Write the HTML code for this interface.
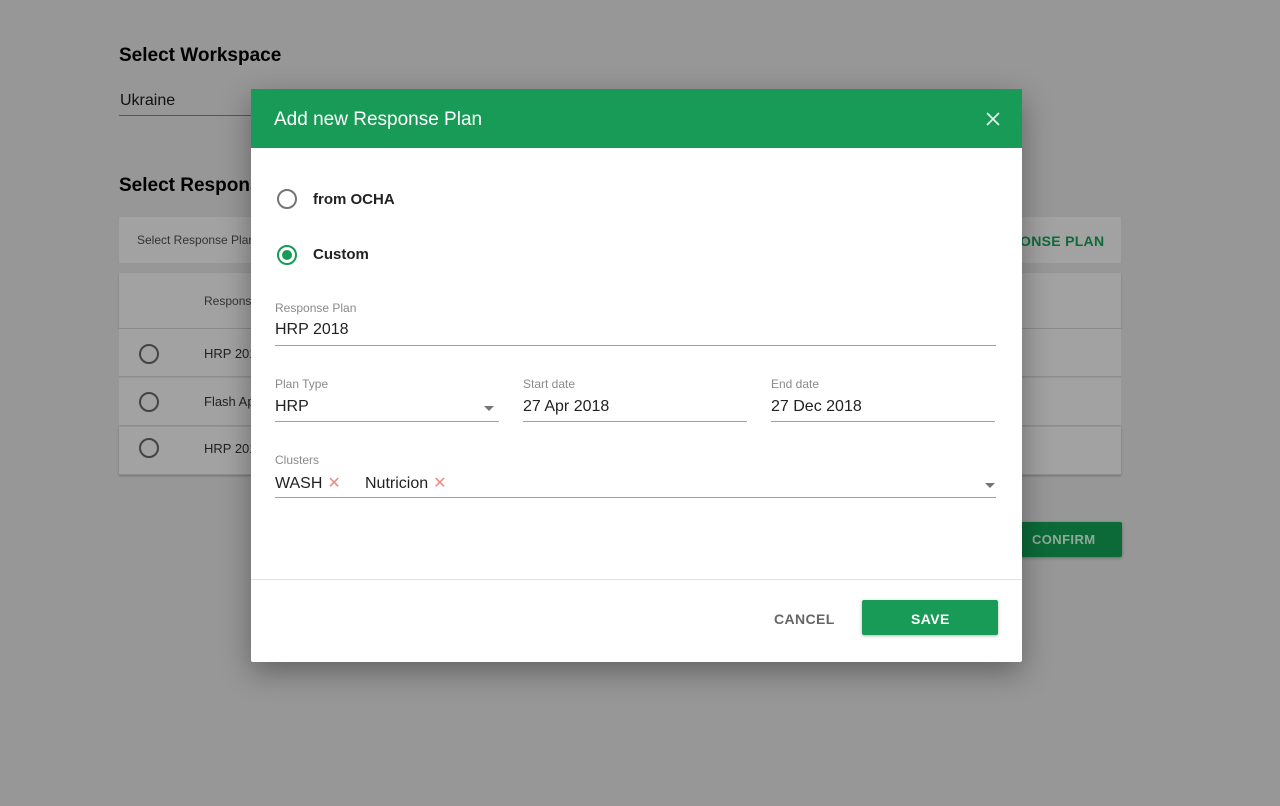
<!DOCTYPE html>
<html><head><style>
body{margin:0;width:1280px;height:806px;background:#979797;font-family:"Liberation Sans",sans-serif;position:relative;overflow:hidden;}
.a{position:absolute;}
h2{margin:0;font-size:19px;font-weight:bold;color:#000;}
.rad{position:absolute;width:16px;height:16px;border:2px solid #3f3f3f;border-radius:50%;}
.row{position:absolute;left:119px;width:1002px;height:47px;background:#a2a2a2;border-bottom:1px solid #8e8e8e;}
.lbl{position:absolute;font-size:12px;color:#8a8a8a;}
.val{position:absolute;font-size:16px;color:#222;}
.ln{position:absolute;height:1px;background:#9e9e9e;}
.x{color:#ef8a7e;font-size:16px;margin-left:5px;}
</style></head><body>
<h2 class="a" style="left:119px;top:45px">Select Workspace</h2>
<div class="a" style="left:120px;top:92px;font-size:16px;color:#111">Ukraine</div>
<div class="a" style="left:119px;top:115px;width:140px;height:1px;background:#555"></div>
<h2 class="a" style="left:119px;top:175px">Select Response Plan</h2>
<div class="a" style="left:119px;top:217px;width:1002px;height:46px;background:#a2a2a2"></div>
<div class="a" style="left:137px;top:233px;font-size:12px;color:#333">Select Response Plan</div>
<div class="a" style="left:1020px;top:233px;font-size:14px;font-weight:bold;color:#0c6b38;letter-spacing:.3px">ONSE PLAN</div>
<div class="a" style="left:119px;top:273px;width:1002px;height:55px;background:#a2a2a2;border-bottom:1px solid #8a8a8a;box-shadow:0 1px 2px rgba(0,0,0,.2)"></div>
<div class="a" style="left:204px;top:294px;font-size:12px;color:#333">Respons</div>
<div class="row" style="top:329px"></div><div class="row" style="top:378px"></div><div class="row" style="top:427px;box-shadow:0 1px 2px rgba(0,0,0,.25)"></div>
<div class="rad" style="left:139px;top:344px;border-color:#444"></div>
<div class="rad" style="left:139px;top:392px;border-color:#444"></div>
<div class="rad" style="left:139px;top:438px;border-color:#444"></div>
<div class="a" style="left:204px;top:346px;font-size:13px;color:#222">HRP 201</div>
<div class="a" style="left:204px;top:394px;font-size:13px;color:#222">Flash Ap</div>
<div class="a" style="left:204px;top:441px;font-size:13px;color:#222">HRP 201</div>
<div class="a" style="left:1010px;top:522px;width:112px;height:35px;background:#0c6a38;border-radius:2px;box-shadow:0 1px 3px rgba(0,0,0,.3)"></div>
<div class="a" style="left:1032px;top:532px;font-size:13px;font-weight:bold;color:#8fa99a;letter-spacing:.4px">CONFIRM</div>

<div class="a" style="left:251px;top:89px;width:771px;height:573px;background:#fff;box-shadow:0 10px 30px rgba(0,0,0,.35);border-radius:2px">
 <div class="a" style="left:0;top:0;width:771px;height:59px;background:#189b56"></div>
 <div class="a" style="left:23px;top:20px;font-size:19px;color:#fff">Add new Response Plan</div>
 <svg class="a" style="left:735px;top:23px" width="14" height="14"><path d="M1 1L13 13M13 1L1 13" stroke="#e8f5ee" stroke-width="1.6"/></svg>
 <div class="rad" style="left:26px;top:100px;border-color:#757575"></div>
 <div class="val" style="left:62px;top:102px;font-size:15px;font-weight:bold;color:#222">from OCHA</div>
 <div class="rad" style="left:26px;top:156px;border-color:#189b56"></div>
 <div class="a" style="left:31px;top:161px;width:10px;height:10px;border-radius:50%;background:#189b56"></div>
 <div class="val" style="left:62px;top:157px;font-size:15px;font-weight:bold;color:#222">Custom</div>
 <div class="lbl" style="left:24px;top:212px">Response Plan</div>
 <div class="val" style="left:24px;top:232px">HRP 2018</div>
 <div class="ln" style="left:24px;top:256px;width:721px"></div>
 <div class="lbl" style="left:24px;top:288px">Plan Type</div>
 <div class="val" style="left:24px;top:309px">HRP</div>
 <div class="a" style="left:233px;top:317px;border:5px solid transparent;border-top:5px solid #757575;border-bottom:0"></div>
 <div class="ln" style="left:24px;top:332px;width:224px"></div>
 <div class="lbl" style="left:272px;top:288px">Start date</div>
 <div class="val" style="left:272px;top:309px">27 Apr 2018</div>
 <div class="ln" style="left:272px;top:332px;width:224px"></div>
 <div class="lbl" style="left:520px;top:288px">End date</div>
 <div class="val" style="left:520px;top:309px">27 Dec 2018</div>
 <div class="ln" style="left:520px;top:332px;width:224px"></div>
 <div class="lbl" style="left:24px;top:364px">Clusters</div>
 <div class="val" style="left:24px;top:384px">WASH<span class="x">✕</span></div>
 <div class="val" style="left:114px;top:384px">Nutricion<span class="x">✕</span></div>
 <div class="a" style="left:734px;top:394px;border:5px solid transparent;border-top:5px solid #757575;border-bottom:0"></div>
 <div class="ln" style="left:24px;top:408px;width:721px"></div>
 <div class="a" style="left:0;top:490px;width:771px;height:1px;background:#e3e3e3"></div>
 <div class="a" style="left:523px;top:522px;font-size:14px;font-weight:bold;color:#666;letter-spacing:.4px">CANCEL</div>
 <div class="a" style="left:611px;top:511px;width:136px;height:35px;background:#189b56;border-radius:2px;box-shadow:0 1px 3px rgba(0,0,0,.3)"></div>
 <div class="a" style="left:660px;top:522px;font-size:14px;font-weight:bold;color:#fff;letter-spacing:.4px">SAVE</div>
</div>
</body></html>
